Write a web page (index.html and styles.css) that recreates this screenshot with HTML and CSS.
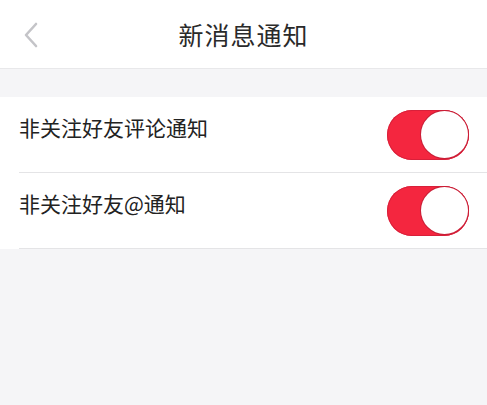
FILE: index.html
```html
<!DOCTYPE html>
<html lang="zh">
<head>
<meta charset="utf-8">
<title>新消息通知</title>
<link rel="stylesheet" href="styles.css">
</head>
<body>
  <header class="nav">
    <span class="back">
      <svg width="16" height="26" viewBox="0 0 16 26"><path d="M13 2 L3 13 L13 24" fill="none" stroke="#c4c4c8" stroke-width="2.6" stroke-linecap="round" stroke-linejoin="round"/></svg>
    </span>
    <h1 class="title">新消息通知</h1>
  </header>
  <div class="gap"></div>
  <section class="list">
    <div class="row">
      <span class="label">非关注好友评论通知</span>
      <span class="switch on"><span class="knob"></span></span>
    </div>
    <div class="row">
      <span class="label">非关注好友@通知</span>
      <span class="switch on"><span class="knob"></span></span>
    </div>
  </section>
</body>
</html>
```

FILE: styles.css
```css
html, body {
  margin: 0;
  padding: 0;
  background: #f5f5f7;
  font-family: "Noto Sans CJK SC", "Noto Sans", sans-serif;
  color: #222;
}

.nav {
  height: 68px;
  background: #fff;
  border-bottom: 1px solid #e8e8ea;
  display: flex;
  align-items: center;
  justify-content: center;
  position: relative;
}

.back {
  position: absolute;
  left: 23px;
  top: 22px;
  display: flex;
}

.title {
  margin: 0;
  font-size: 25px;
  font-weight: 400;
  letter-spacing: 1px;
  color: #2a2a2a;
}

.gap {
  height: 28px;
}

.list {
  background: #fff;
  padding-left: 19px;
}

.row {
  height: 75px;
  display: flex;
  align-items: center;
  justify-content: space-between;
  padding-right: 18px;
  border-bottom: 1px solid #e4e4e6;
}

.label {
  font-size: 21px;
  margin-top: -16px;
  color: #222;
}

.switch {
  width: 82px;
  height: 50px;
  border-radius: 25px;
  background: #f4263f;
  box-sizing: border-box;
  display: flex;
  align-items: center;
  justify-content: flex-end;
  padding: 1px;
  box-shadow: inset 0 0 0 1px #d8203a;
}

.knob {
  width: 47px;
  height: 47px;
  border-radius: 50%;
  background: #fff;
  box-shadow: 0 0 0 1px #c81e36;
}
```
